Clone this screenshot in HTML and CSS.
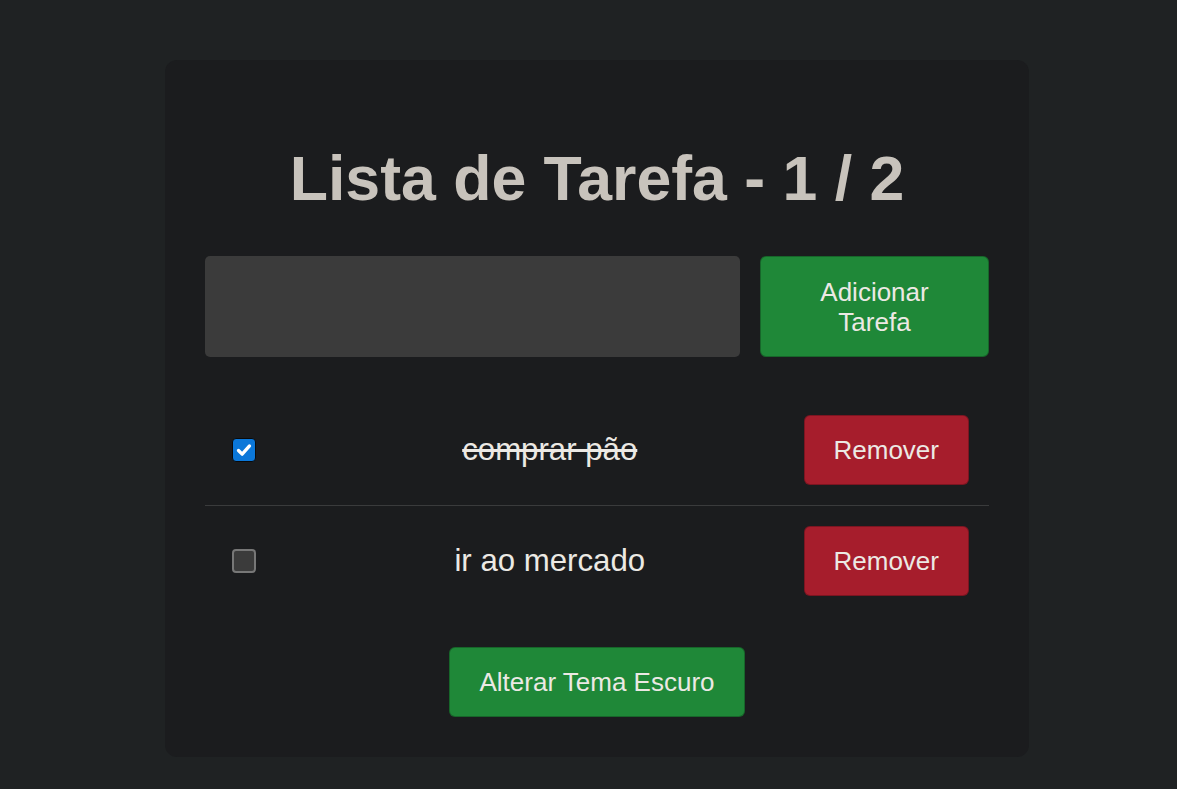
FILE: index.html
```html
<!DOCTYPE html>
<html lang="pt">
<head>
<meta charset="utf-8">
<title>Lista de Tarefa</title>
<link rel="stylesheet" href="styles.css">
</head>
<body>
<main class="card">
  <h1 class="title">Lista de Tarefa - 1 / 2</h1>
  <div class="add-row">
    <input class="task-input" type="text" aria-label="Nova tarefa">
    <button class="btn btn-green btn-add">Adicionar<br>Tarefa</button>
  </div>
  <ul class="list">
    <li class="item">
      <span class="check checked" role="checkbox" aria-checked="true">
        <svg viewBox="0 0 24 24" width="24" height="24"><path d="M6 12.5l4 4 8-9" fill="none" stroke="#fff" stroke-width="3.6" stroke-linecap="round" stroke-linejoin="round"/></svg>
      </span>
      <span class="text done">comprar pão</span>
      <button class="btn btn-red">Remover</button>
    </li>
    <li class="item">
      <span class="check" role="checkbox" aria-checked="false"></span>
      <span class="text">ir ao mercado</span>
      <button class="btn btn-red">Remover</button>
    </li>
  </ul>
  <div class="footer">
    <button class="btn btn-green">Alterar Tema Escuro</button>
  </div>
</main>
</body>
</html>
```
FILE: styles.css
```css
html, body {
  margin: 0;
  padding: 0;
  background: #1f2223;
  font-family: "Liberation Sans", Arial, sans-serif;
  color: #e8e6e3;
}
body {
  padding: 60px 0 32px 165px;
}
.card {
  width: 784px;
  background: #1b1c1e;
  border-radius: 12px;
  padding: 40px;
}
.title {
  margin: 42px 0 42px;
  font-size: 62.6px;
  font-weight: bold;
  line-height: 72px;
  text-align: center;
  color: #c8c3bc;
}
.add-row {
  display: flex;
  gap: 20px;
}
.task-input {
  flex: 1;
  height: 101px;
  box-sizing: border-box;
  background: #3b3b3b;
  border: none;
  border-radius: 5px;
  outline: none;
  margin: 0;
  color: #e8e6e3;
  font-size: 26px;
  padding: 0 16px;
}
.btn {
  font-family: "Liberation Sans", Arial, sans-serif;
  font-size: 26px;
  line-height: 30px;
  color: #ece9e4;
  border: 1px solid rgba(0,0,0,0.25);
  border-radius: 6px;
  padding: 19px 29px;
  cursor: pointer;
}
.btn-green {
  background: #1f8838;
}
.btn-red {
  background: #a61d2c;
}
.btn-add {
  width: 229px;
  height: 101px;
  padding: 0 20px;
}
.list {
  list-style: none;
  margin: 38px 0 0;
  padding: 0;
}
.item {
  display: flex;
  align-items: center;
  padding: 20px;
  height: 70px;
  border-bottom: 1px solid #3a3b3c;
}
.item:last-child {
  border-bottom: none;
}
.check {
  width: 24px;
  height: 24px;
  box-sizing: border-box;
  margin-left: 7px;
  border-radius: 4px;
  background: #3b3b3b;
  border: 2px solid #777;
  display: flex;
  align-items: center;
  justify-content: center;
  flex: none;
}
.check.checked {
  background: #0b77d9;
  border: 1px solid #0a0a0a;
}
.check svg {
  display: block;
  width: 22px;
  height: 22px;
}
.text {
  flex: 1;
  text-align: center;
  font-size: 31.2px;
  margin-left: 40px;
  color: #ece9e4;
}
.text.done {
  text-decoration: line-through;
}
.footer {
  display: flex;
  justify-content: center;
  margin-top: 31px;
}
```
